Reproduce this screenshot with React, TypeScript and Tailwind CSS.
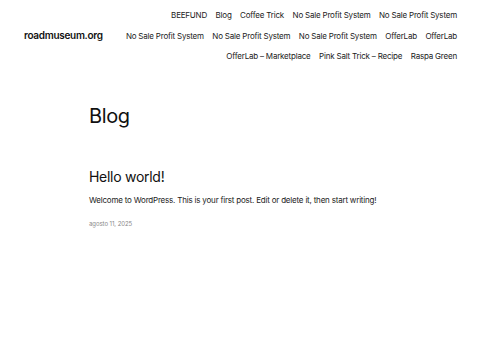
import React from "react";

const rows: string[][] = [
  ["BEEFUND", "Blog", "Coffee Trick", "No Sale Profit System", "No Sale Profit System"],
  ["No Sale Profit System", "No Sale Profit System", "No Sale Profit System", "OfferLab", "OfferLab"],
  ["OfferLab – Marketplace", "Pink Salt Trick – Recipe", "Raspa Green"],
];

export default function App() {
  return (
    <div
      className="w-[480px] h-[360px] bg-white text-[#111111] overflow-hidden"
      style={{ fontFamily: "Inter, 'Liberation Sans', sans-serif" }}
    >
      <header className="flex items-center justify-between pl-[24px] pr-[23px] pt-[5px]">
        <div className="text-[10px] font-semibold tracking-[-0.03em] text-[#111] whitespace-nowrap">roadmuseum.org</div>
        <nav className="flex flex-col items-end">
          {rows.map((r, i) => (
            <div key={i} className="flex gap-[8.5px] h-[20.5px] items-center text-[8px] tracking-[-0.025em] text-[#222] whitespace-nowrap">
              {r.map((t, j) => (
                <span key={j} className="shrink-0">{t}</span>
              ))}
            </div>
          ))}
        </nav>
      </header>
      <main className="pl-[89px] pt-[36px]">
        <h1 className="text-[20px] leading-[26px] font-normal tracking-[-0.02em] text-[#111]">Blog</h1>
        <h2 className="mt-[39px] text-[14px] leading-[18px] font-normal tracking-[-0.02em] text-[#111]">Hello world!</h2>
        <p className="mt-[8px] text-[8px] leading-[12px] tracking-[-0.025em] text-[#222]">
          Welcome to WordPress. This is your first post. Edit or delete it, then start writing!
        </p>
        <div className="mt-[13px] text-[6px] leading-[9px] tracking-[-0.01em] text-[#888]">agosto 11, 2025</div>
      </main>
    </div>
  );
}
